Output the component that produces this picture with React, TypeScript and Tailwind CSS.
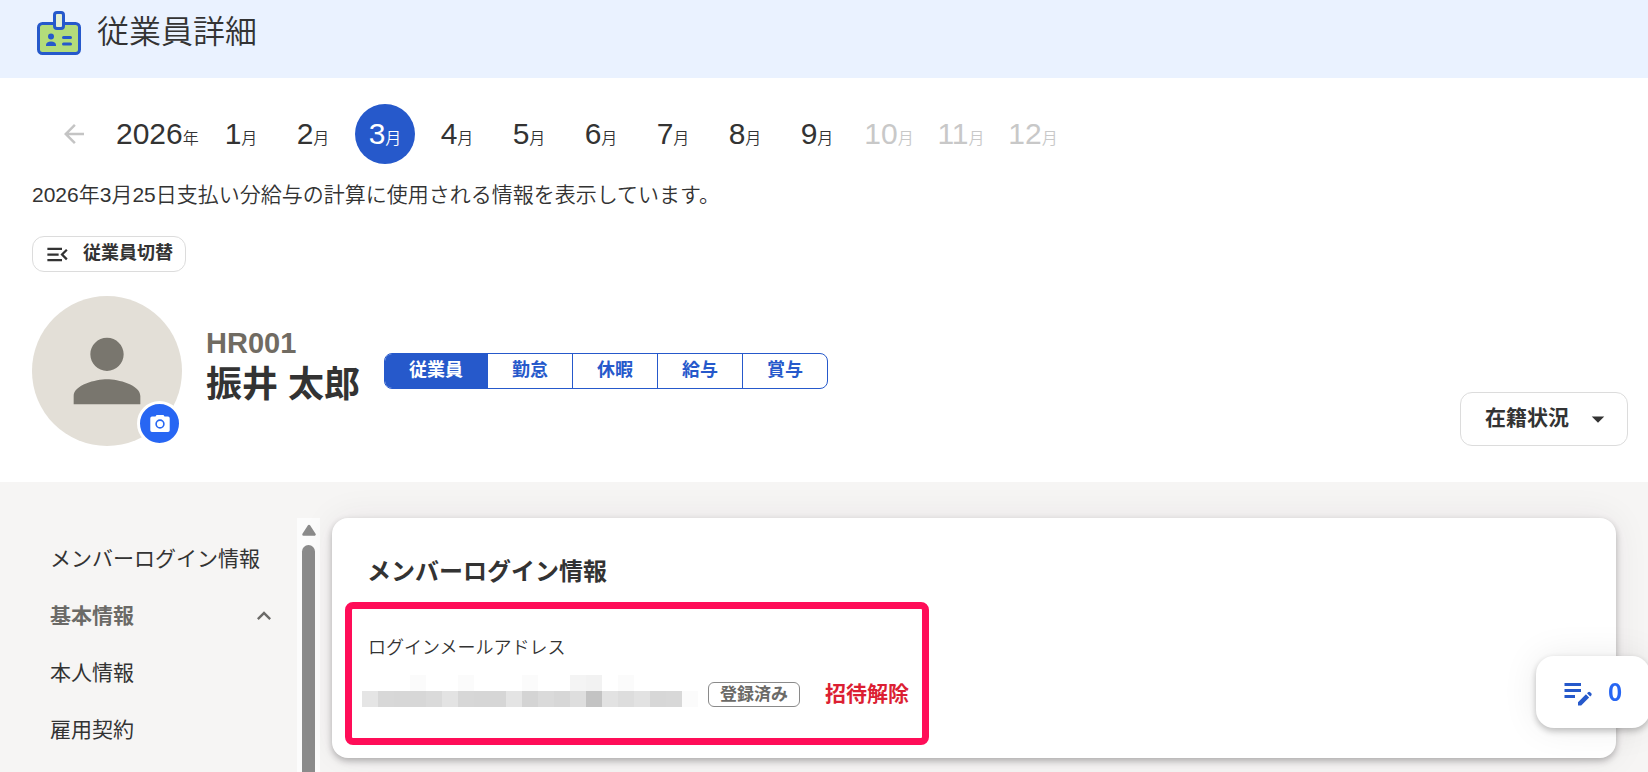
import { MdArrowBack, MdArrowDropDown, MdEditNote, MdExpandLess, MdMenuOpen, MdPerson } from "react-icons/md"

const months = [1, 2, 3, 4, 5, 6, 7, 8, 9, 10, 11, 12]
const currentMonth = 3
const lastOpenMonth = 9

const tabs = ["勤怠", "休暇", "給与", "賞与"]

// masked mail address, one grey per block
const maskTop = ["", "", "", "#fbfbfb", "", "", "#fbfbfb", "", "", "", "#fbfbfb", "", "", "#f4f4f4", "#f2f2f2", "", "#fbfbfb", "", "", "", ""]
const maskBottom = [
    "#e5e5e5", "#d8d8d8", "#d7d7d7", "#d7d7d7", "#dadada", "#e3e3e3", "#d7d7d7",
    "#d6d6d6", "#d6d6d6", "#e4e4e4", "#d4d4d4", "#dadada", "#d7d7d7", "#dedede",
    "#c3c3c3", "#e2e2e2", "#dddddd", "#e2e2e2", "#d7d7d7", "#d8d8d8", "#fbfbfb",
]

function BadgeIcon() {
    return (
        <svg viewBox="0 0 44 44" className="size-11" aria-hidden="true">
            <rect x="1.5" y="12.5" width="41" height="30" rx="4" fill="#b3dc7a" stroke="#2659cb" strokeWidth="3" />
            <rect x="17.5" y="1.5" width="9" height="16" rx="2.5" fill="#e4efd3" stroke="#2659cb" strokeWidth="3" />
            <circle cx="14" cy="25.5" r="3" fill="#2659cb" />
            <path d="M9 35v-1c0-2 2-3.500 5-3.500s5 1.500 5 3.500v1z" fill="#2659cb" />
            <path d="M26.500 26.500h7M26.500 33h7" stroke="#2659cb" strokeWidth="3" strokeLinecap="round" />
        </svg>
    )
}

function CameraIcon() {
    return (
        <svg viewBox="0 0 24 24" className="size-6" aria-hidden="true">
            <path d="M8.500 3h7l1 1.500h3.500a1.700 1.700 0 0 1 1.700 1.700v12a1.700 1.700 0 0 1-1.700 1.700H4a1.700 1.700 0 0 1-1.700-1.700v-12A1.700 1.700 0 0 1 4 4.500h3.500z" fill="#ffffff" />
            <circle cx="12" cy="12" r="3.9" fill="none" stroke="#2766f3" strokeWidth="1.6" />
        </svg>
    )
}

function Header() {
    return (
        <header className="flex h-[78px] items-start gap-4 bg-[#eaf2ff] pl-[37px] pt-[11px]">
            <BadgeIcon />
            <h1 className="text-[32px] leading-[42px] font-[350]">従業員詳細</h1>
        </header>
    )
}

function MonthNav() {
    return (
        <nav className="flex items-center pl-[27px]" aria-label="対象月">
            <button type="button" aria-label="前の年" className="mr-[27px] text-[#c4c4c4]">
                <MdArrowBack size={30} />
            </button>
            <span className="w-[95px] text-3xl leading-10">
                2026<span className="text-base font-[350]">年</span>
            </span>
            <ul className="flex gap-3">
                {months.map((m) => (
                    <li key={m}>
                        <button
                            type="button"
                            disabled={m > lastOpenMonth}
                            className={
                                m === currentMonth
                                    ? "size-[60px] rounded-full bg-[#2659cb] text-white whitespace-nowrap"
                                    : "size-[60px] whitespace-nowrap disabled:text-[#c8c8c8]"
                            }
                        >
                            <span className="text-3xl leading-10">{m}</span>
                            <span className="text-base font-[350]">月</span>
                        </button>
                    </li>
                ))}
            </ul>
        </nav>
    )
}

function Profile() {
    return (
        <div className="mt-6 flex items-center pb-9">
            <div className="relative shrink-0">
                <div className="flex size-[150px] items-center justify-center rounded-full bg-[#e3dfd7] text-[#79766e]">
                    <MdPerson size={100} />
                </div>
                <button
                    type="button"
                    aria-label="写真を変更"
                    className="absolute right-0 bottom-0 flex size-[45px] items-center justify-center rounded-full border-3 border-white bg-[#2766f3]"
                >
                    <CameraIcon />
                </button>
            </div>

            <div className="ml-6 pb-2 font-bold">
                <p className="text-[29px] leading-9 text-[#706b62]">HR001</p>
                <h2 className="text-4xl leading-[48px]">振井 太郎</h2>
            </div>

            <div className="ml-6 flex h-9 overflow-hidden rounded-lg border border-[#2659cb] text-lg font-bold text-[#2659cb]">
                <button type="button" className="w-[102px] bg-[#2659cb] pb-0.5 leading-8 text-white">従業員</button>
                {tabs.map((t) => (
                    <button key={t} type="button" className="w-[85px] border-l border-[#2659cb] pb-0.5 leading-8">
                        {t}
                    </button>
                ))}
            </div>

            <button
                type="button"
                aria-haspopup="menu"
                className="ml-auto flex h-[54px] w-[168px] items-center justify-between self-end rounded-xl border border-[#dcdcdc] pr-3.5 pl-6 text-[21px] font-bold"
            >
                <span className="pb-0.5">在籍状況</span>
                <MdArrowDropDown size={30} />
            </button>
        </div>
    )
}

function Sidebar() {
    return (
        <aside className="flex w-80 shrink-0 pt-9">
            <nav className="grow pt-3 pl-[50px] text-[21px] leading-[57px]" aria-label="従業員メニュー">
                <a href="#login" className="block">メンバーログイン情報</a>
                <button type="button" aria-expanded="true" className="flex w-full items-center justify-between pr-[19px] font-bold text-[#6b6a67]">
                    基本情報
                    <MdExpandLess size={28} />
                </button>
                <a href="#person" className="block">本人情報</a>
                <a href="#contract" className="block">雇用契約</a>
            </nav>
            <div className="flex w-[23px] flex-col items-center bg-[#fcfcfc] pt-1.5" aria-hidden="true">
                <svg viewBox="0 0 14 12" className="h-3 w-3.5">
                    <path d="M7 2 12.500 10.500h-11z" fill="#8b8b8b" stroke="#8b8b8b" strokeWidth="2.500" strokeLinejoin="round" />
                </svg>
                <div className="mt-[9px] w-[13px] grow rounded-t-full bg-[#8b8b8b]" />
            </div>
        </aside>
    )
}

function MaskRow({ colors }: { colors: string[] }) {
    return (
        <div className="flex h-4">
            {colors.map((c, i) => (
                <span key={i} className="w-4" style={{ backgroundColor: c || "transparent" }} />
            ))}
        </div>
    )
}

function LoginCard() {
    return (
        <section className="h-60 grow rounded-2xl bg-white px-[13px] pt-[34px] shadow-[0_3px_7px_rgba(0,0,0,0.28),0_0_36px_rgba(60,30,50,0.07)]">
            <h3 className="pl-[22px] text-2xl leading-10 font-bold">メンバーログイン情報</h3>
            <div className="mt-2.5 h-[143px] w-[584px] rounded-lg border-7 border-[#ff0d58] pt-[25px]">
                <h4 className="pl-4 text-lg leading-7 font-[350]">ログインメールアドレス</h4>
                <div className="mt-[13px] flex items-end pl-2.5">
                    <div role="img" aria-label="メールアドレス">
                        <MaskRow colors={maskTop} />
                        <MaskRow colors={maskBottom} />
                    </div>
                    <span className="ml-2.5 h-[25px] w-[92px] rounded-md border border-[#8a8a8a] text-center text-[17px] leading-[23px] font-bold text-[#6b6a67]">
                        登録済み
                    </span>
                    <button type="button" className="ml-[25px] text-[21px] leading-[26px] font-bold text-[#dc1f33]">招待解除</button>
                </div>
            </div>
        </section>
    )
}

function App() {
    return (
        <div className="flex min-h-screen flex-col overflow-x-hidden bg-white font-['Liberation_Sans','Noto_Sans_CJK_JP',sans-serif] text-[#333333]">
            <Header />

            <main className="flex grow flex-col">
                <div className="pt-[26px] pr-5 pl-8">
                    <MonthNav />
                    <p className="mt-[15px] text-[21px] leading-8 font-[350]">
                        2026年3月25日支払い分給与の計算に使用される情報を表示しています。
                    </p>
                    <button type="button" className="mt-[25px] flex h-9 items-center gap-3 rounded-xl border border-[#dcdcdc] pr-3 pl-[11px] text-lg font-bold">
                        <MdMenuOpen size={27} />
                        <span className="pb-0.5">従業員切替</span>
                    </button>
                    <Profile />
                </div>

                <div className="flex grow gap-3 bg-[#f6f5f4] pr-8">
                    <Sidebar />
                    <div className="flex grow items-start pt-9">
                        <LoginCard />
                    </div>
                </div>
            </main>

            <button
                type="button"
                className="fixed -right-0.5 bottom-11 flex h-[72px] w-[114px] items-center rounded-[18px] bg-white pl-6 font-['Noto_Sans_CJK_JP',sans-serif] text-2xl font-bold text-[#2766f3] shadow-[0_3px_7px_rgba(0,0,0,0.25),0_0_36px_rgba(0,0,0,0.08)]"
            >
                <MdEditNote size={36} color="#2659cb" />
                <span className="ml-3 pb-0.5">0</span>
            </button>
        </div>
    )
}

export default App
